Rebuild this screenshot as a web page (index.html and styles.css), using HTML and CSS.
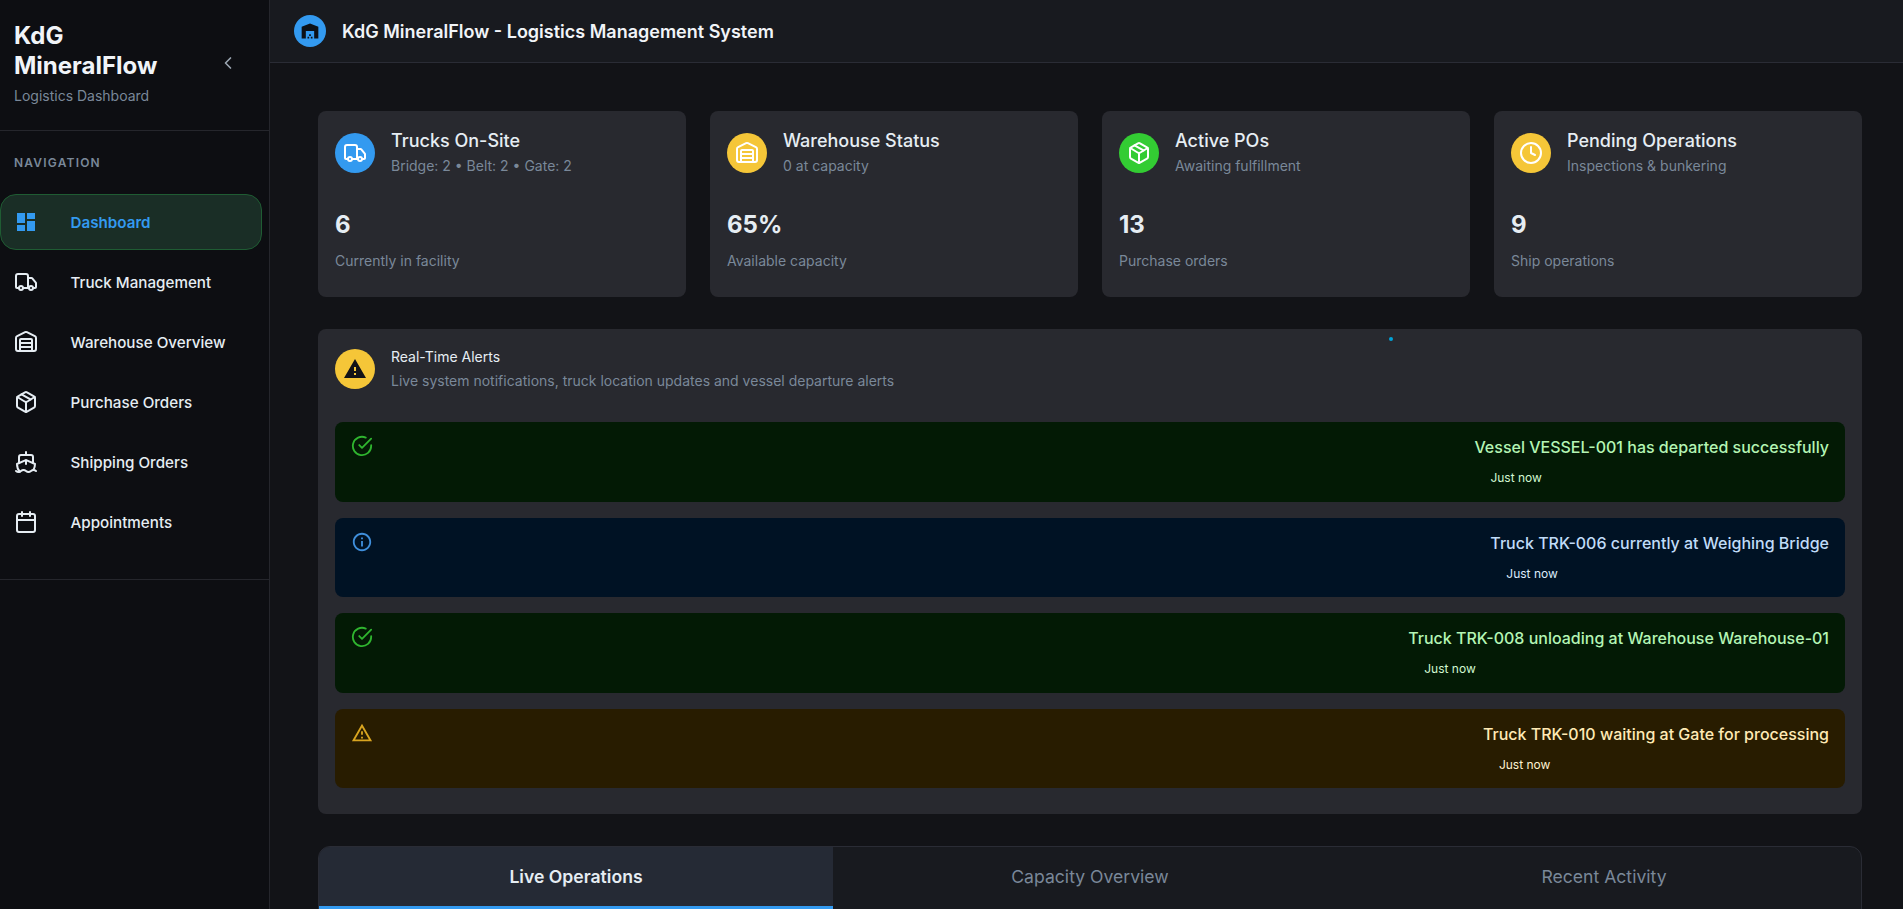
FILE: index.html

```html
<!DOCTYPE html>
<html lang="en">
  <head>
    <meta charset="UTF-8" />
    <meta name="viewport" content="width=device-width, initial-scale=1.0" />
    <title>KdG MineralFlow</title>
    <link rel="stylesheet" href="styles.css">
  </head>

  <body>
    <svg class="sprite" aria-hidden="true">
      <symbol id="i-truck" viewBox="0 0 24 24"><path d="M14 18V6a2 2 0 0 0-2-2H4a2 2 0 0 0-2 2v11a1 1 0 0 0 1 1h2" /><path d="M15 18H9" /><path d="M19 18h2a1 1 0 0 0 1-1v-3.65a1 1 0 0 0-.22-.624l-3.48-4.35A1 1 0 0 0 17.52 8H14" /><circle cx="17" cy="18" r="2" /><circle cx="7" cy="18" r="2" /></symbol>
      <symbol id="i-warehouse" viewBox="0 0 24 24"><path d="M18 21V10a1 1 0 0 0-1-1H7a1 1 0 0 0-1 1v11" /><path d="M22 19a2 2 0 0 1-2 2H4a2 2 0 0 1-2-2V8a2 2 0 0 1 1.132-1.803l7.95-3.974a2 2 0 0 1 1.837 0l7.948 3.974A2 2 0 0 1 22 8z" /><path d="M6 13h12" /><path d="M6 17h12" /></symbol>
      <symbol id="i-package" viewBox="0 0 24 24"><path d="M11 21.73a2 2 0 0 0 2 0l7-4A2 2 0 0 0 21 16V8a2 2 0 0 0-1-1.73l-7-4a2 2 0 0 0-2 0l-7 4A2 2 0 0 0 3 8v8a2 2 0 0 0 1 1.73z" /><path d="M12 22V12" /><path d="m3.3 7 7.703 4.734a2 2 0 0 0 1.994 0L20.7 7" /><path d="m7.5 4.27 9 5.15" /></symbol>
      <symbol id="i-ship" viewBox="0 0 24 24"><path d="M12 10.189V14" /><path d="M12 2v3" /><path d="M19 13V7a2 2 0 0 0-2-2H7a2 2 0 0 0-2 2v6" /><path d="M19.38 20A11.6 11.6 0 0 0 21 14l-8.188-3.639a2 2 0 0 0-1.624 0L3 14a11.6 11.6 0 0 0 2.81 7.76" /><path d="M2 21c.6.5 1.2 1 2.5 1 2.5 0 2.5-2 5-2 1.3 0 1.9.5 2.5 1s1.2 1 2.5 1c2.5 0 2.5-2 5-2 1.3 0 1.9.5 2.5 1" /></symbol>
      <symbol id="i-calendar" viewBox="0 0 24 24"><path d="M8 2v4" /><path d="M16 2v4" /><rect x="3" y="4" width="18" height="18" rx="2" /><path d="M3 10h18" /></symbol>
      <symbol id="i-clock" viewBox="0 0 24 24"><circle cx="12" cy="12" r="10" /><path d="M12 6v6l4 2" /></symbol>
      <symbol id="i-check" viewBox="0 0 24 24"><path d="M22 11.08V12a10 10 0 1 1-5.93-9.14" /><path d="M22 4 12 14.01l-3-3" /></symbol>
    </svg>

    <div class="app">
      <aside class="sidebar">
        <div class="brand">
          <div>
            <div class="brand-name">KdG MineralFlow</div>
            <div class="brand-sub">Logistics Dashboard</div>
          </div>
          <svg class="collapse icon-line" viewBox="0 0 24 24"><path d="m15 18-6-6 6-6" /></svg>
        </div>

        <nav class="nav">
          <div class="nav-label">NAVIGATION</div>
          <a class="nav-item active">
            <svg class="nav-icon fill-icon" viewBox="0 0 24 24"><path d="M3 13h8V3H3zm0 8h8v-6H3zm10 0h8V11h-8zm0-18v6h8V3z" /></svg>
            Dashboard
          </a>
          <a class="nav-item"><svg class="nav-icon icon-line"><use href="#i-truck" /></svg>Truck Management</a>
          <a class="nav-item"><svg class="nav-icon icon-line"><use href="#i-warehouse" /></svg>Warehouse Overview</a>
          <a class="nav-item"><svg class="nav-icon icon-line"><use href="#i-package" /></svg>Purchase Orders</a>
          <a class="nav-item"><svg class="nav-icon icon-line"><use href="#i-ship" /></svg>Shipping Orders</a>
          <a class="nav-item"><svg class="nav-icon icon-line"><use href="#i-calendar" /></svg>Appointments</a>
        </nav>
      </aside>

      <div class="main">
        <header class="topbar">
          <span class="logo">
            <svg viewBox="0 0 24 24"><path d="M22 21V7L12 3 2 7v14h5v-9h10v9zM11 19H9v2h2zm2-3h-2v2h2zm2 3h-2v2h2z" /></svg>
          </span>
          <h1>KdG MineralFlow - Logistics Management System</h1>
        </header>

        <main class="content">
          <section class="cards">
            <div class="card">
              <div class="card-head">
                <span class="round blue"><svg class="icon-line"><use href="#i-truck" /></svg></span>
                <div>
                  <div class="card-title">Trucks On-Site</div>
                  <div class="card-sub">Bridge: 2 • Belt: 2 • Gate: 2</div>
                </div>
              </div>
              <div class="card-value">6</div>
              <div class="card-sub">Currently in facility</div>
            </div>
            <div class="card">
              <div class="card-head">
                <span class="round yellow"><svg class="icon-line"><use href="#i-warehouse" /></svg></span>
                <div>
                  <div class="card-title">Warehouse Status</div>
                  <div class="card-sub">0 at capacity</div>
                </div>
              </div>
              <div class="card-value">65%</div>
              <div class="card-sub">Available capacity</div>
            </div>
            <div class="card">
              <div class="card-head">
                <span class="round green"><svg class="icon-line"><use href="#i-package" /></svg></span>
                <div>
                  <div class="card-title">Active POs</div>
                  <div class="card-sub">Awaiting fulfillment</div>
                </div>
              </div>
              <div class="card-value">13</div>
              <div class="card-sub">Purchase orders</div>
            </div>
            <div class="card">
              <div class="card-head">
                <span class="round yellow"><svg class="icon-line"><use href="#i-clock" /></svg></span>
                <div>
                  <div class="card-title">Pending Operations</div>
                  <div class="card-sub">Inspections &amp; bunkering</div>
                </div>
              </div>
              <div class="card-value">9</div>
              <div class="card-sub">Ship operations</div>
            </div>
          </section>

          <section class="panel">
            <span class="live-dot"></span>
            <div class="panel-head">
              <span class="round yellow">
                <svg class="fill-dark" viewBox="0 0 24 24"><path d="M1 21h22L12 2zm12-3h-2v-2h2zm0-4h-2v-4h2z" /></svg>
              </span>
              <div>
                <div class="panel-title">Real-Time Alerts</div>
                <div class="panel-sub">Live system notifications, truck location updates and vessel departure alerts</div>
              </div>
            </div>

            <div class="alerts">
              <div class="alert success">
                <svg class="alert-icon icon-line"><use href="#i-check" /></svg>
                <div class="alert-msg">
                  <div class="alert-text">Vessel VESSEL-001 has departed successfully</div>
                  <div class="alert-time">Just now</div>
                </div>
              </div>
              <div class="alert info">
                <svg class="alert-icon fill-icon" viewBox="0 0 24 24"><path d="M11 7h2v2h-2zm0 4h2v6h-2zm1-9C6.48 2 2 6.48 2 12s4.48 10 10 10 10-4.48 10-10S17.52 2 12 2zm0 18c-4.41 0-8-3.59-8-8s3.59-8 8-8 8 3.59 8 8-3.59 8-8 8z" /></svg>
                <div class="alert-msg">
                  <div class="alert-text">Truck TRK-006 currently at Weighing Bridge</div>
                  <div class="alert-time">Just now</div>
                </div>
              </div>
              <div class="alert success">
                <svg class="alert-icon icon-line"><use href="#i-check" /></svg>
                <div class="alert-msg">
                  <div class="alert-text">Truck TRK-008 unloading at Warehouse Warehouse-01</div>
                  <div class="alert-time">Just now</div>
                </div>
              </div>
              <div class="alert warning">
                <svg class="alert-icon fill-icon" viewBox="0 0 24 24"><path d="M12 5.99 19.53 19H4.47L12 5.99M12 2 1 21h22L12 2zm1 14h-2v2h2v-2zm0-6h-2v4h2v-4z" /></svg>
                <div class="alert-msg">
                  <div class="alert-text">Truck TRK-010 waiting at Gate for processing</div>
                  <div class="alert-time">Just now</div>
                </div>
              </div>
            </div>
          </section>

          <section class="tabs">
            <div class="tab active">Live Operations</div>
            <div class="tab">Capacity Overview</div>
            <div class="tab">Recent Activity</div>
          </section>
        </main>
      </div>
    </div>
  </body>
</html>
```

FILE: styles.css

```css
* {
  box-sizing: border-box;
}

body {
  margin: 0;
  height: 100vh;
  overflow: hidden;
  font-family: Inter, "Noto Sans", sans-serif;
  background-color: #121317;
  color: #e6edf3;
}

.sprite {
  display: none;
}

.icon-line {
  fill: none;
  stroke: currentColor;
  stroke-width: 2;
  stroke-linecap: round;
  stroke-linejoin: round;
}

.fill-icon {
  fill: currentColor;
}

.app {
  display: flex;
  height: 100vh;
}

/* sidebar */
.sidebar {
  width: 270px;
  flex-shrink: 0;
  background-color: #0d0e12;
  border-right: 1px solid #25262c;
}

.brand {
  display: flex;
  align-items: center;
  justify-content: space-between;
  height: 131px;
  padding: 20px 31px 24px 14px;
  border-bottom: 1px solid #25262c;
}

.brand-name {
  width: 170px;
  font-size: 24px;
  line-height: 30px;
  font-weight: 700;
  color: #f1f4f8;
}

.brand-sub {
  margin-top: 4px;
  font-size: 14px;
  line-height: 21px;
  color: #7a8899;
}

.collapse {
  width: 20px;
  height: 20px;
  color: #9aa5b1;
}

.nav {
  padding: 24px 0 29px;
  border-bottom: 1px solid #25262c;
}

.nav-label {
  padding-left: 14px;
  margin-bottom: 23px;
  font-size: 12px;
  line-height: 16px;
  font-weight: 600;
  letter-spacing: 1.2px;
  color: #7a8899;
}

.nav-item {
  display: flex;
  align-items: center;
  gap: 32.5px;
  width: 262px;
  height: 56px;
  margin-bottom: 4px;
  padding-left: 14px;
  font-size: 15.2px;
  font-weight: 500;
  color: #e6edf3;
}

.nav-item:last-child {
  margin-bottom: 0;
}

.nav-item.active {
  background-color: #1a2e26;
  border: 1px solid #1f5c33;
  border-radius: 16px;
  font-weight: 600;
  color: #339af0;
  padding-left: 13px;
}

.nav-icon {
  width: 24px;
  height: 24px;
  flex-shrink: 0;
}

/* top bar */
.main {
  flex: 1;
  min-width: 0;
}

.topbar {
  display: flex;
  align-items: center;
  gap: 16px;
  height: 63px;
  padding-left: 24px;
  background-color: #181a1f;
  border-bottom: 1px solid #2a2c35;
}

.topbar h1 {
  margin: 0;
  font-size: 18px;
  font-weight: 600;
  color: #f1f4f8;
}

.logo {
  display: flex;
  align-items: center;
  justify-content: center;
  width: 32px;
  height: 32px;
  border-radius: 50%;
  background-color: #339af0;
}

.logo svg {
  width: 20px;
  height: 20px;
  fill: #0d1117;
}

/* page content */
.content {
  padding: 48px 41px 0 48px;
}

.cards {
  display: grid;
  grid-template-columns: repeat(4, 1fr);
  gap: 24px;
}

.card {
  height: 186px;
  padding: 18px 17px;
  background-color: #28292f;
  border-radius: 8px;
}

.card-head {
  display: flex;
  align-items: center;
  gap: 16px;
  margin-bottom: 33px;
}

.card-title {
  font-size: 18px;
  line-height: 24px;
  font-weight: 500;
  color: #e6edf3;
  margin-bottom: 2px;
}

.card-sub {
  font-size: 14px;
  line-height: 21px;
  color: #7a8899;
}

.card-value {
  font-size: 24px;
  line-height: 32px;
  font-weight: 700;
  color: #e6edf3;
  margin-bottom: 9px;
}

.round {
  display: flex;
  align-items: center;
  justify-content: center;
  width: 40px;
  height: 40px;
  flex-shrink: 0;
  border-radius: 50%;
  color: #fff;
}

.round svg {
  width: 24px;
  height: 24px;
}

.round.blue {
  background-color: #339af0;
}

.round.yellow {
  background-color: #f5c638;
}

.round.green {
  background-color: #33cc33;
}

.fill-dark {
  fill: #121317;
}

/* alerts */
.panel {
  position: relative;
  margin-top: 32px;
  padding: 17px 17px 26px;
  background-color: #28292f;
  border-radius: 8px;
}

.live-dot {
  position: absolute;
  top: 8px;
  left: 1071px;
  width: 4px;
  height: 4px;
  border-radius: 50%;
  background-color: #00a3d9;
}

.panel-head {
  display: flex;
  align-items: center;
  gap: 16px;
  margin-bottom: 31px;
}

.panel-title {
  font-size: 14px;
  line-height: 21px;
  color: #e6edf3;
  margin-bottom: 3px;
}

.panel-sub {
  font-size: 14px;
  line-height: 21px;
  color: #7a8899;
}

.alerts {
  display: flex;
  flex-direction: column;
  gap: 16px;
}

.alert {
  display: flex;
  justify-content: space-between;
  height: 79.5px;
  padding: 13px 16px;
  border-radius: 8px;
}

.alert-icon {
  width: 22px;
  height: 22px;
  flex-shrink: 0;
}

.alert-text {
  font-size: 16px;
  line-height: 24px;
  font-weight: 500;
}

.alert-time {
  margin: 10px 0 0 16px;
  font-size: 12px;
  line-height: 18px;
}

.alert.success {
  background-color: #031a05;
}

.alert.success .alert-icon {
  color: #2fb52f;
}

.alert.success .alert-text {
  color: #b4f5b4;
}

.alert.success .alert-time {
  color: #d2f8d2;
}

.alert.info {
  background-color: #001224;
}

.alert.info .alert-icon {
  color: #3f8fdc;
}

.alert.info .alert-text {
  color: #c0dcf8;
}

.alert.info .alert-time {
  color: #dcebfb;
}

.alert.warning {
  background-color: #281c00;
}

.alert.warning .alert-icon {
  color: #d9a520;
}

.alert.warning .alert-text {
  color: #ffeab5;
}

.alert.warning .alert-time {
  color: #fff2d2;
}

/* tabs */
.tabs {
  display: grid;
  grid-template-columns: repeat(3, 1fr);
  margin-top: 32px;
  background-color: #181a1f;
  border: 1px solid #2a2c35;
  border-radius: 12px 12px 0 0;
  overflow: hidden;
}

.tab {
  height: 62px;
  padding-bottom: 4px;
  display: flex;
  align-items: center;
  justify-content: center;
  font-size: 17.6px;
  color: #7a8899;
}

.tab.active {
  background-color: #252a35;
  border-bottom: 3px solid #339af0;
  padding-bottom: 1px;
  font-weight: 600;
  color: #e6edf3;
}
```
